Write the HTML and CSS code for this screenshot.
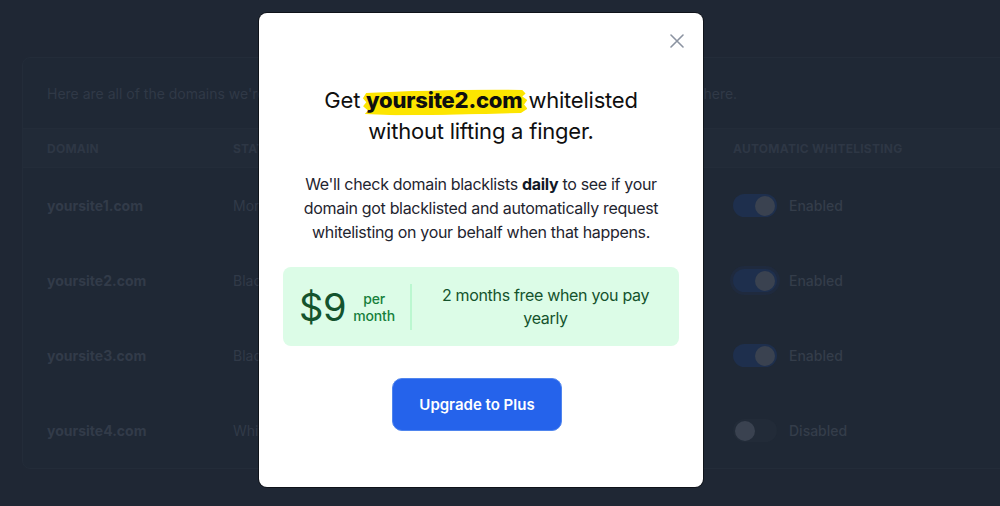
FILE: index.html
```html
<!DOCTYPE html>
<html lang="en">
<head>
<meta charset="utf-8">
<title>Domains</title>
<link rel="stylesheet" href="styles.css">
</head>
<body>
<div class="page">
  <div class="card">
    <div class="intro">Here are all of the domains we're monitoring. You can toggle automatic whitelisting for any of them here.</div>
    <div class="row head">
      <div class="c-domain">Domain</div>
      <div class="c-status">Status</div>
      <div class="c-checked">Last checked</div>
      <div class="c-auto">Automatic whitelisting</div>
    </div>
    <div class="row">
      <div class="c-domain dom">yoursite1.com</div>
      <div class="c-status">Monitoring</div>
      <div class="c-checked">Today</div>
      <div class="c-auto"><span class="toggle on"><span class="knob"></span></span><span class="tlabel">Enabled</span></div>
    </div>
    <div class="row">
      <div class="c-domain dom">yoursite2.com</div>
      <div class="c-status">Blacklisted</div>
      <div class="c-checked">Today</div>
      <div class="c-auto"><span class="toggle on focus"><span class="knob"></span></span><span class="tlabel">Enabled</span></div>
    </div>
    <div class="row">
      <div class="c-domain dom">yoursite3.com</div>
      <div class="c-status">Blacklisted</div>
      <div class="c-checked">Today</div>
      <div class="c-auto"><span class="toggle on"><span class="knob"></span></span><span class="tlabel">Enabled</span></div>
    </div>
    <div class="row">
      <div class="c-domain dom">yoursite4.com</div>
      <div class="c-status">Whitelisted</div>
      <div class="c-checked">Today</div>
      <div class="c-auto"><span class="toggle"><span class="knob"></span></span><span class="tlabel">Disabled</span></div>
    </div>
  </div>
</div>

<div class="modal">
  <button class="close" aria-label="Close">
    <svg width="14" height="14" viewBox="0 0 14 14"><path d="M1 1L13 13M13 1L1 13" stroke="#8b93a1" stroke-width="1.6" stroke-linecap="round"/></svg>
  </button>
  <h1 class="title">Get <span class="hl">yoursite2.com</span> whitelisted<br>without lifting a finger.</h1>
  <p class="desc">We'll check domain blacklists <b>daily</b> to see if your domain got blacklisted and automatically request whitelisting on your behalf when that happens.</p>
  <div class="price">
    <div class="amount">
      <span class="num">$9</span>
      <span class="per">per<br>month</span>
    </div>
    <div class="divider"></div>
    <div class="deal">2 months free when you pay yearly</div>
  </div>
  <div class="actions">
    <button class="upgrade">Upgrade to Plus</button>
  </div>
</div>
</body>
</html>
```

FILE: styles.css
```css
* { box-sizing: border-box; }
html, body { margin: 0; padding: 0; }
body {
  background: #1f2734;
  font-family: Inter, "Noto Sans", "Liberation Sans", sans-serif;
  width: 1000px;
  height: 506px;
  overflow: hidden;
  position: relative;
}
.page { padding: 57px 0 0 22px; }
.card {
  border: 1px solid #232c39;
  border-radius: 8px;
  background: #1f2835;
  width: 1010px;
}
.intro {
  height: 70px;
  display: flex;
  align-items: center;
  padding-left: 24px;
  font-size: 14px;
  color: #303947;
  white-space: nowrap;
  overflow: hidden;
}
.row {
  display: flex;
  align-items: center;
  height: 75px;
  padding-left: 24px;
  font-size: 14px;
  color: #313a48;
}
.row.head {
  height: 40px;
  background: #212a37;
  border-top: 1px solid #232c39;
  border-bottom: 1px solid #232c39;
  font-size: 12px;
  font-weight: 700;
  letter-spacing: 0.02em;
  text-transform: uppercase;
  color: #2e3745;
}
.c-domain { width: 186px; }
.c-status { width: 250px; }
.c-checked { width: 250px; }
.c-auto { display: flex; align-items: center; gap: 12px; }
.dom { font-weight: 700; color: #323b49; }
.toggle {
  width: 44px;
  height: 23px;
  border-radius: 12px;
  background: #222b38;
  display: flex;
  align-items: center;
  padding: 0 2px;
}
.toggle.on { background: #1e2f4d; justify-content: flex-end; }
.toggle.focus { box-shadow: 0 0 0 3px #1f2a3e; }
.knob {
  width: 20px;
  height: 20px;
  border-radius: 50%;
  background: #3a4250;
}
.tlabel { font-weight: 500; color: #343d4a; font-size: 14px; }

.modal {
  position: absolute;
  left: 259px;
  top: 13px;
  width: 444px;
  height: 474px;
  background: #fff;
  border-radius: 8px;
  box-shadow: 0 0 0 1px rgba(0,0,0,0.5);
  padding: 72px 24px 0 24px;
  text-align: center;
}
.close {
  position: absolute;
  top: 21px;
  right: 19px;
  width: 14px;
  height: 14px;
  padding: 0;
  border: 0;
  background: none;
  display: flex;
}
.title {
  margin: 0;
  font-size: 22px;
  line-height: 31px;
  font-weight: 400;
  color: #0f0f0f;
  letter-spacing: -0.01em;
}
.hl {
  position: relative;
  font-weight: 800;
  z-index: 0;
}
.hl::before {
  content: "";
  position: absolute;
  left: -3px;
  right: -5px;
  top: 3px;
  bottom: -2px;
  background: #fde500;
  clip-path: polygon(2% 8%, 30% 2%, 70% 0%, 97% 4%, 99% 18%, 97% 30%, 100% 45%, 98% 62%, 100% 80%, 96% 96%, 60% 100%, 20% 98%, 1% 92%, 3% 78%, 0% 60%, 2% 45%, 0% 28%);
  transform: rotate(-0.8deg);
  z-index: -1;
}
.desc {
  margin: 25px auto 0 auto;
  width: 370px;
  font-size: 16px;
  line-height: 24px;
  letter-spacing: -0.02em;
  color: #1f2530;
}
.desc b { font-weight: 700; color: #111827; }
.price {
  margin-top: 23px;
  height: 79px;
  background: #dcfce7;
  border-radius: 8px;
  display: flex;
  align-items: center;
  padding: 0 0 0 16px;
}
.amount { display: flex; align-items: center; gap: 7px; padding-right: 15px; }
.num { font-size: 38px; color: #14532d; font-weight: 400; letter-spacing: -0.01em; }
.per { font-size: 14px; line-height: 17px; color: #16803c; font-weight: 500; letter-spacing: -0.01em; }
.divider { width: 2px; height: 46px; background: #bbf7d0; }
.deal {
  flex: 1;
  padding: 0 12px;
  font-size: 16px;
  line-height: 23px;
  letter-spacing: -0.02em;
  color: #14532d;
}
.actions { margin-top: 32px; display: flex; justify-content: center; }
.upgrade {
  width: 170px;
  height: 53px;
  margin-right: 8px;
  border: 1px solid #4f85ee;
  border-radius: 10px;
  background: #2563eb;
  color: #fff;
  font-family: inherit;
  font-size: 15px;
  font-weight: 600;
}
```
